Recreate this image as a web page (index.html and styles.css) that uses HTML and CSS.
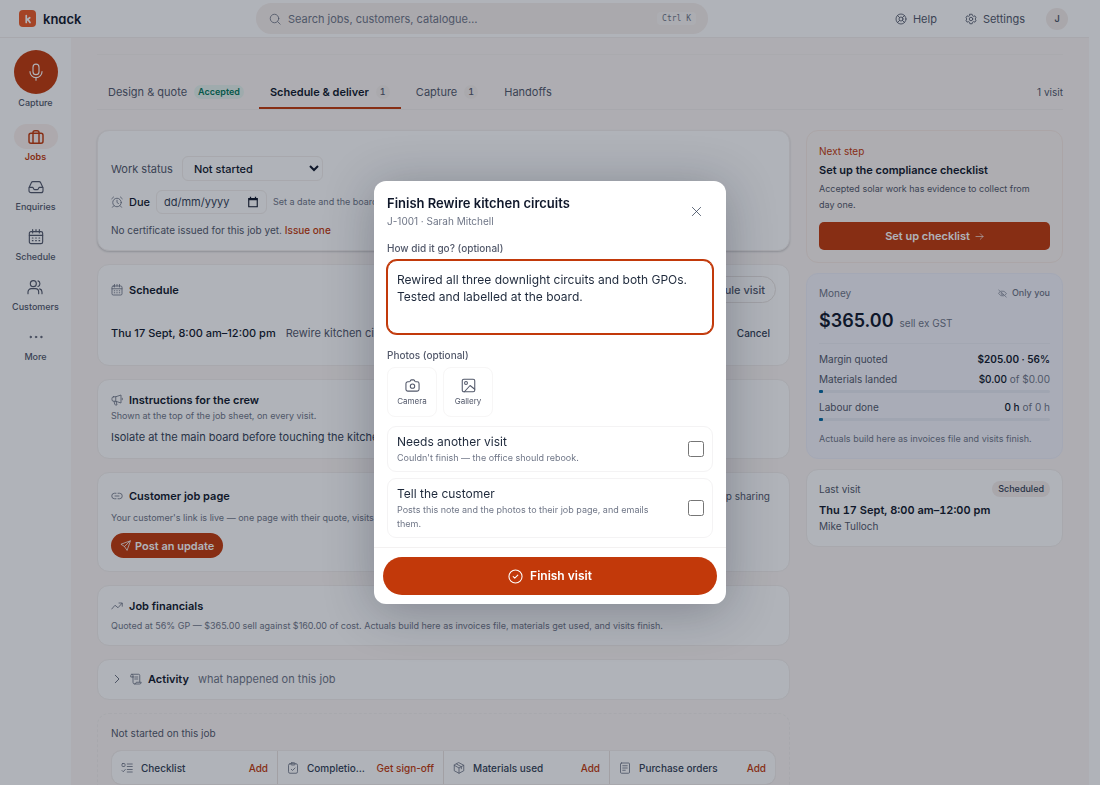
FILE: index.html
```html
<!DOCTYPE html>
<html lang="en-AU">
<head>
<meta charset="utf-8">
<meta name="viewport" content="width=device-width, initial-scale=1">
<title>Rewire kitchen circuits – knack</title>
<link rel="stylesheet" href="styles.css">
</head>
<body>
<svg class="sprite" aria-hidden="true">
  <symbol id="i-search" viewBox="0 0 24 24"><circle cx="11" cy="11" r="8.5"/><path d="m17.3 17.3 5 5"/></symbol>
  <symbol id="i-help" viewBox="0 0 24 24"><circle cx="12" cy="12" r="10"/><circle cx="12" cy="12" r="4"/><path d="m5 5 4.2 4.2M14.8 14.8 19 19M19 5l-4.2 4.2M9.200 14.8 5 19"/></symbol>
  <symbol id="i-gear" viewBox="0 0 24 24"><path d="M9.700 2.500h4.600l.7 2.900 2 1.200 2.900-.9 2.300 4-2.200 2.100v.4l2.200 2.100-2.300 4-2.900-.9-2 1.200-.7 2.900H9.700L9 18.600l-2-1.200-2.900.9-2.300-4L4 12.200v-.4L1.800 9.700l2.300-4 2.900.9 2-1.200z"/><circle cx="12" cy="12" r="3.500"/></symbol>
  <symbol id="i-mic" viewBox="0 0 24 24"><rect x="8" y="1.500" width="8" height="14" rx="4"/><path d="M4 11.500a8 8 0 0 0 16 0M12 19.500v3.500"/></symbol>
  <symbol id="i-case" viewBox="0 0 24 24"><rect x="1.500" y="6.500" width="21" height="15" rx="3"/><path d="M7.500 21.500v-16a3 3 0 0 1 3-3h3a3 3 0 0 1 3 3v16"/></symbol>
  <symbol id="i-inbox" viewBox="0 0 24 24"><path d="M1.500 13 5 5.500Q5.700 4 7.400 4h9.200q1.700 0 2.400 1.500L22.500 13v4.500a3 3 0 0 1-3 3h-15a3 3 0 0 1-3-3zM1.500 12.500h5.700l1.600 2.700q.5.800 1.400.8h3.600q.9 0 1.400-.8l1.600-2.700h5.700"/></symbol>
  <symbol id="i-cal" viewBox="0 0 24 24"><rect x="2" y="4" width="20" height="18" rx="2.500"/><path d="M2 9.500h20M7 1v5M17 1v5M12 1v3"/><path d="M6.500 13.500h1M11.500 13.500h1M16.500 13.500h1M6.500 17.500h1M11.500 17.500h1M16.500 17.500h1"/></symbol>
  <symbol id="i-users" viewBox="0 0 24 24"><circle cx="9.500" cy="7" r="4.500"/><path d="M1.500 22v-2.500a5 5 0 0 1 5-5h6a5 5 0 0 1 5 5V22M16.500 2.800a4.500 4.500 0 0 1 0 8.400M19 14.800q3.500 1.100 3.500 4.700V22"/></symbol>
  <symbol id="i-dots" viewBox="0 0 24 24"><g fill="currentColor" stroke-width="1"><circle cx="4" cy="12" r="1.200"/><circle cx="12" cy="12" r="1.200"/><circle cx="20" cy="12" r="1.200"/></g></symbol>
  <symbol id="i-alarm" viewBox="0 0 24 24"><circle cx="12" cy="13" r="8.500"/><path d="M12 8.500V13l3 2M1.500 5.500l3.700-3.500M22.500 5.500 18.800 2M5.500 19.500 3 22.500M18.500 19.500l2.500 3"/></symbol>
  <symbol id="i-horn" viewBox="0 0 24 24"><path d="M5 5.500h4.500L20 2v16l-10.500-3.500H5q-3 0-3-3v-3q0-3 3-3zM9.500 5.500v9M6 14.500l1.500 6q.4 1.500 2 1.500h2.500l-1.700-7M22.500 8.500v3"/></symbol>
  <symbol id="i-link" viewBox="0 0 24 24"><path d="M10 17.500H7a5.500 5.500 0 0 1 0-11h3M14 6.500h3a5.500 5.500 0 0 1 0 11h-3M8 12h8"/></symbol>
  <symbol id="i-send" viewBox="0 0 24 24"><path d="M22 2 2 9.200l7.800 5L15 22zM9.800 14.200 22 2"/></symbol>
  <symbol id="i-trend" viewBox="0 0 24 24"><path d="m1.500 18 6.500-7.500 6 5L22 6.500M16 6h6.500v6.500"/></symbol>
  <symbol id="i-chev" viewBox="0 0 24 24"><path d="m8.500 4.500 7.500 7.500-7.500 7.500"/></symbol>
  <symbol id="i-scroll" viewBox="0 0 24 24"><path d="M6 7V18.500a3.500 3.500 0 0 0 3.500 3.500H19a3.500 3.500 0 0 0 3.500-3.500H12.500a3.500 3.500 0 0 1-3.200 3.500M6 8H1.500V5A2.500 2.500 0 0 1 4 2.500h13a2.500 2.500 0 0 1 2.500 2.500v13M4 2.500Q6 3 6 5v3M9.500 8h6M9.500 12h6"/></symbol>
  <symbol id="i-list" viewBox="0 0 24 24"><rect x="2" y="3" width="6" height="6" rx="1.500"/><path d="m2 17 2.500 2.500L8.500 15M12.500 4h10M12.500 9h10M12.500 15h10M12.500 20h10"/></symbol>
  <symbol id="i-clip" viewBox="0 0 24 24"><rect x="3" y="3.500" width="18" height="19" rx="3"/><rect x="8" y="1.500" width="8" height="4.500" rx="1.500"/><path d="m8.500 14.500 2.500 2.500 5-5"/></symbol>
  <symbol id="i-box" viewBox="0 0 24 24"><path d="m12 1.500 9.500 5v11L12 22.500l-9.500-5v-11zM2.500 6.500 12 12l9.500-5.500M12 12v10.500M7 4l9.700 5.500v4"/></symbol>
  <symbol id="i-receipt" viewBox="0 0 24 24"><rect x="3" y="2" width="18" height="20.500" rx="2"/><path d="M7.500 7.500h9M7.500 12h9M7.500 16.500h5"/></symbol>
  <symbol id="i-eyeoff" viewBox="0 0 24 24"><path d="M2 3 22 21.500M9 5.500q8-2 13.500 6.500-1.500 2.500-3.700 4M5.500 7Q3 9 1.500 12q5.500 8.500 13.500 6.500M9.500 10a3.300 3.300 0 0 0 4.500 4.800"/></symbol>
  <symbol id="i-arrow" viewBox="0 0 24 24"><path d="M2.500 12h19M14 4.500l7.500 7.500-7.500 7.500"/></symbol>
  <symbol id="i-x" viewBox="0 0 24 24"><path d="m3 3 18 18M21 3 3 21"/></symbol>
  <symbol id="i-camera" viewBox="0 0 24 24"><path d="M4.500 6h2.300q.9 0 1.400-.8l.8-1.400q.5-.8 1.400-.8h3.200q.9 0 1.400.8l.8 1.400q.5.800 1.400.8h2.300a3 3 0 0 1 3 3v9a3 3 0 0 1-3 3h-15a3 3 0 0 1-3-3V9a3 3 0 0 1 3-3z"/><circle cx="12" cy="13" r="3.500"/></symbol>
  <symbol id="i-image" viewBox="0 0 24 24"><rect x="2" y="2" width="20" height="20" rx="2.500"/><circle cx="8" cy="8" r="2.300"/><path d="m5.500 22 9-10 7.500 6"/></symbol>
  <symbol id="i-check" viewBox="0 0 24 24"><circle cx="12" cy="12" r="10.500"/><path d="m8.300 12.300 2.500 2.300 4.900-4.900"/></symbol>
  <symbol id="i-date" viewBox="0 0 24 24"><path d="M3.500 5h17v16.500h-17z" stroke-width="2.200"/><path d="M3 6.500h18" stroke-width="4"/><path d="M7 1.500V5M17 1.500V5" stroke-width="2.500"/></symbol>
  <symbol id="i-knack" viewBox="0 0 24 24"><path d="M8.500 5v14M15.500 9.500l-6 4.500M11.500 12.500l4.500 6.500" stroke-width="3.400"/></symbol>
</svg>

<div class="app">
  <header class="topbar">
    <a class="brand" href="#"><span class="brand-mark"><svg class="icon"><use href="#i-knack"/></svg></span>knack</a>
    <label class="search"><svg class="icon"><use href="#i-search"/></svg><input type="search" aria-label="Search" placeholder="Search jobs, customers, catalogue…"><kbd>Ctrl K</kbd></label>
    <nav class="top-links" aria-label="Account">
      <a href="#"><svg class="icon"><use href="#i-help"/></svg>Help</a>
      <a href="#"><svg class="icon"><use href="#i-gear"/></svg>Settings</a>
      <button class="avatar" type="button">J</button>
    </nav>
  </header>

  <div class="shell">
    <nav class="rail" aria-label="Main">
      <button class="capture" type="button"><span class="capture-disc"><svg class="icon"><use href="#i-mic"/></svg></span>Capture</button>
      <a class="rail-item is-active" href="#"><span class="rail-pill"><svg class="icon"><use href="#i-case"/></svg></span>Jobs</a>
      <a class="rail-item" href="#"><span class="rail-pill"><svg class="icon"><use href="#i-inbox"/></svg></span>Enquiries</a>
      <a class="rail-item" href="#"><span class="rail-pill"><svg class="icon"><use href="#i-cal"/></svg></span>Schedule</a>
      <a class="rail-item" href="#"><span class="rail-pill"><svg class="icon"><use href="#i-users"/></svg></span>Customers</a>
      <a class="rail-item" href="#"><span class="rail-pill"><svg class="icon"><use href="#i-dots"/></svg></span>More</a>
    </nav>

    <main class="page">
      <div class="tabs">
        <a class="tab" href="#">Design &amp; quote <span class="badge badge-ok">Accepted</span></a>
        <a class="tab is-active" href="#">Schedule &amp; deliver <span class="badge">1</span></a>
        <a class="tab" href="#">Capture <span class="badge">1</span></a>
        <a class="tab" href="#">Handoffs</a>
        <span class="tabs-note">1 visit</span>
      </div>

      <div class="columns">
        <div class="stack">
          <section class="card card-status">
            <div class="field field-status"><label for="status">Work status</label>
              <select id="status"><option>Not started</option></select></div>
            <div class="field field-due"><svg class="icon"><use href="#i-alarm"/></svg><label class="strong" for="due">Due</label>
              <span class="date"><input id="due" type="text" placeholder="dd/mm/yyyy"><svg class="icon"><use href="#i-date"/></svg></span>
              <span class="hint">Set a date and the board will track it.</span></div>
            <p class="cert">No certificate issued for this job yet. <a href="#">Issue one</a></p>
          </section>

          <section class="card card-schedule">
            <div class="head"><h2><svg class="icon"><use href="#i-cal"/></svg>Schedule</h2><button class="outline" type="button">Schedule visit</button></div>
            <div class="visit"><strong>Thu 17 Sept, 8:00 am–12:00 pm</strong><span>Rewire kitchen circuits</span><button class="plain dark" type="button">Cancel</button></div>
          </section>

          <section class="card card-crew">
            <h2><svg class="icon"><use href="#i-horn"/></svg>Instructions for the crew</h2>
            <p class="hint">Shown at the top of the job sheet, on every visit.</p>
            <p class="body">Isolate at the main board before touching the kitchen circuits.</p>
          </section>

          <section class="card card-link">
            <div class="head"><h2><svg class="icon"><use href="#i-link"/></svg>Customer job page</h2><button class="plain" type="button">Stop sharing</button></div>
            <p class="hint">Your customer's link is live — one page with their quote, visits and photos.</p>
            <button class="post" type="button"><svg class="icon"><use href="#i-send"/></svg>Post an update</button>
          </section>

          <section class="card card-fin">
            <h2><svg class="icon"><use href="#i-trend"/></svg>Job financials</h2>
            <p class="hint">Quoted at 56% GP — $365.00 sell against $160.00 of cost. Actuals build here as invoices file, materials get used, and visits finish.</p>
          </section>

          <section class="card card-activity">
            <svg class="icon"><use href="#i-chev"/></svg>
            <h2><svg class="icon"><use href="#i-scroll"/></svg>Activity</h2><span>what happened on this job</span>
          </section>

          <section class="card card-todo">
            <p>Not started on this job</p>
            <div class="todo">
              <div class="todo-item"><svg class="icon"><use href="#i-list"/></svg><span>Checklist</span><button class="add" type="button">Add</button></div>
              <div class="todo-item"><svg class="icon"><use href="#i-clip"/></svg><span>Completion certificate</span><button class="add" type="button">Get sign-off</button></div>
              <div class="todo-item"><svg class="icon"><use href="#i-box"/></svg><span>Materials used</span><button class="add" type="button">Add</button></div>
              <div class="todo-item"><svg class="icon"><use href="#i-receipt"/></svg><span>Purchase orders</span><button class="add" type="button">Add</button></div>
            </div>
          </section>
        </div>

        <aside class="side">
          <section class="card card-next">
            <p class="eyebrow">Next step</p>
            <h2>Set up the compliance checklist</h2>
            <p class="copy">Accepted solar work has evidence to collect from day one.</p>
            <button class="setup" type="button">Set up checklist <svg class="icon"><use href="#i-arrow"/></svg></button>
          </section>

          <section class="card card-money">
            <div class="pair money-head"><span>Money</span><span class="only"><svg class="icon"><use href="#i-eyeoff"/></svg>Only you</span></div>
            <p class="amount"><strong>$365.00</strong> <span>sell ex GST</span></p>
            <div class="pair row-margin"><span>Margin quoted</span><b>$205.00 · 56%</b></div>
            <div class="pair"><span>Materials landed</span><span class="of"><em>$0.00</em> of $0.00</span></div>
            <div class="bar"><i></i></div>
            <div class="pair"><span>Labour done</span><span class="of"><em>0 h</em> of 0 h</span></div>
            <div class="bar"><i></i></div>
            <p class="note">Actuals build here as invoices file and visits finish.</p>
          </section>

          <section class="card card-last">
            <div class="pair"><span>Last visit</span><span class="chip">Scheduled</span></div>
            <h2>Thu 17 Sept, 8:00 am–12:00 pm</h2>
            <p>Mike Tulloch</p>
          </section>
        </aside>
      </div>
    </main>
  </div>
</div>

<div class="overlay">
  <form class="modal" role="dialog" aria-modal="true" aria-labelledby="modal-title">
    <div class="modal-body">
      <header class="modal-head">
        <div><h1 id="modal-title">Finish Rewire kitchen circuits</h1><p>J-1001 · Sarah Mitchell</p></div>
        <button class="close" type="button" aria-label="Close"><svg class="icon"><use href="#i-x"/></svg></button>
      </header>
      <label class="modal-label" for="notes">How did it go? (optional)</label>
      <textarea id="notes">Rewired all three downlight circuits and both GPOs. Tested and labelled at the board.</textarea>
      <p class="modal-label photos">Photos (optional)</p>
      <div class="tiles">
        <button class="tile" type="button"><svg class="icon"><use href="#i-camera"/></svg>Camera</button>
        <button class="tile" type="button"><svg class="icon"><use href="#i-image"/></svg>Gallery</button>
      </div>
      <label class="option"><span><b>Needs another visit</b><small>Couldn't finish — the office should rebook.</small></span><input type="checkbox"></label>
      <label class="option"><span><b>Tell the customer</b><small>Posts this note and the photos to their job page, and emails them.</small></span><input type="checkbox"></label>
    </div>
    <footer class="modal-foot"><button class="finish" type="submit"><svg class="icon"><use href="#i-check"/></svg>Finish visit</button></footer>
  </form>
</div>
</body>
</html>
```
FILE: styles.css
```css
:root {
  --ink: #0f172a;
  --text: #334155;
  --muted: #52586a;
  --soft: #6f7687;
  --brand: #c2390a;
  --page: #fcf7f5;
  --line: #f3efed;
}

* { box-sizing: border-box; }

body {
  margin: 0;
  height: 100vh;
  overflow: hidden;
  background: #fff;
  color: var(--muted);
  font: 11px/16px Inter, "Liberation Sans", sans-serif;
}

h1, h2, p { margin: 0; }
a { color: inherit; text-decoration: none; }
button, input, select, textarea { font: inherit; color: inherit; }
button { border: 0; background: none; padding: 0; }
.sprite { display: none; }

.icon {
  width: 12px;
  height: 12px;
  flex: none;
  fill: none;
  stroke: currentColor;
  stroke-width: 1.700;
  stroke-linecap: round;
  stroke-linejoin: round;
}

.app {
  height: 100vh;
  padding-right: 11px;
  display: flex;
  flex-direction: column;
}

/* Top bar */
.topbar {
  height: 38px;
  flex: none;
  display: grid;
  grid-template-columns: 237fr 452fr 360fr;
  align-items: center;
  padding: 0 21px 0 19px;
  border-bottom: 1px solid var(--line);
}
.brand {
  display: flex;
  align-items: center;
  gap: 7px;
  color: var(--ink);
  font-size: 13px;
  font-weight: 600;
  font-feature-settings: "cv11", "ss03";
}
.brand-mark {
  display: grid;
  place-items: center;
  width: 17px;
  height: 17px;
  border-radius: 4px;
  background: #ee5a24;
  color: #fff;
}
.search {
  display: flex;
  align-items: center;
  gap: 7px;
  height: 31px;
  padding: 0 12px 0 13px;
  border-radius: 16px;
  background: #f7f0ed;
  color: var(--soft);
}
.search input {
  flex: 1;
  min-width: 0;
  border: 0;
  padding: 0;
  background: none;
  outline: 0;
}
.search input::placeholder { color: var(--soft); opacity: 1; }
kbd {
  padding: 0 5px;
  border-radius: 4px;
  background: #faf7f5;
  font: 8px/13px "DejaVu Sans Mono", monospace;
}
.top-links {
  display: flex;
  justify-content: flex-end;
  align-items: center;
}
.top-links a { display: flex; align-items: center; gap: 6px; margin-right: 28px; }
.top-links a + a { margin-right: 21px; }
.avatar {
  width: 22px;
  height: 22px;
  border-radius: 50%;
  background: #f5eeeb;
  font-size: 9px;
  font-weight: 600;
}

/* Navigation rail */
.shell { flex: 1; min-height: 0; display: flex; }
.rail {
  width: 71px;
  flex: none;
  display: flex;
  flex-direction: column;
  align-items: center;
  gap: 11px;
  padding-top: 12px;
  font-size: 9px;
  line-height: 12px;
  font-weight: 500;
}
.capture {
  display: flex;
  flex-direction: column;
  align-items: center;
  gap: 3px;
  margin-bottom: 4px;
}
.capture-disc {
  display: grid;
  place-items: center;
  width: 44px;
  height: 44px;
  border-radius: 50%;
  background: var(--brand);
  color: #fff;
}
.capture-disc .icon { width: 18px; height: 18px; stroke-width: 1.500; }
.rail-item {
  display: flex;
  flex-direction: column;
  align-items: center;
  gap: 2px;
}
.rail-pill {
  display: grid;
  place-items: center;
  width: 44px;
  height: 25px;
  border-radius: 13px;
}
.rail-pill .icon { width: 16px; height: 16px; }
.rail-item.is-active { color: var(--brand); font-weight: 600; }
.is-active .rail-pill { background: #fbf1ed; }
.is-active .icon { stroke-width: 2.200; }

/* Page */
.page {
  flex: 1;
  min-width: 0;
  padding: 16px 26px 0;
  overflow: hidden;
  background: var(--page);
}
.tabs {
  display: flex;
  align-items: flex-end;
  gap: 4px;
  padding-top: 21px;
  border-top: 1px solid #f6f2ef;
  border-bottom: 1px solid var(--line);
}
.tab {
  display: flex;
  align-items: center;
  gap: 7px;
  height: 33px;
  padding: 0 11px;
  border-bottom: 2px solid transparent;
}
.tab.is-active { color: var(--ink); border-color: var(--brand); font-weight: 600; }
.badge {
  min-width: 14px;
  padding: 0 4px;
  border-radius: 7px;
  background: #f7f1ee;
  color: var(--muted);
  font-size: 9px;
  line-height: 14px;
  font-weight: 500;
  font-feature-settings: "tnum";
}
.badge-ok { background: #e6f4ee; color: #04785a; font-weight: 600; }
.tabs-note { margin-left: auto; padding-bottom: 9px; font-size: 10px; }

.columns {
  display: grid;
  grid-template-columns: minmax(0, 1fr) 257px;
  gap: 16px;
  padding-top: 20px;
}
.stack { display: flex; flex-direction: column; gap: 13px; }
.side { display: flex; flex-direction: column; gap: 10px; }
.card {
  padding: 12px 13px;
  border: 1px solid var(--line);
  border-radius: 12px;
  background: #fff;
}
.card h2 {
  display: flex;
  align-items: center;
  gap: 6px;
  color: var(--ink);
  font-size: 11px;
  line-height: 16px;
  font-weight: 600;
}
.card h2 .icon { color: var(--soft); }
.hint { color: var(--soft); font-size: 9px; }
.head { display: flex; align-items: center; justify-content: space-between; }
.pair { display: flex; align-items: center; justify-content: space-between; }

.card-status { padding-top: 25px; box-shadow: 0 1px 2px rgb(15 23 42 / .2); }
.field { display: flex; align-items: center; gap: 6px; color: var(--soft); }
.field-status { gap: 9px; color: var(--muted); }
.field select {
  width: 141px;
  height: 25px;
  padding: 0 0 0 7px;
  border: 1px solid var(--line);
  border-radius: 6px;
  background: #fff;
  color: var(--ink);
  font-weight: 500;
}
.field-due { margin-top: 9px; }
.strong { color: var(--ink); font-weight: 500; }
.date {
  display: flex;
  align-items: center;
  width: 111px;
  height: 24px;
  padding: 0 7px;
  border: 1px solid var(--line);
  border-radius: 6px;
  color: var(--ink);
}
.date input { width: 100%; min-width: 0; padding: 0; border: 0; background: none; outline: 0; }
.date input::placeholder { color: var(--text); opacity: 1; }
.date .icon { stroke-linecap: butt; stroke-linejoin: miter; }
.cert { margin-top: 8px; font-size: 10px; }
.cert a, .add { color: var(--brand); font-weight: 500; }

.outline {
  height: 27px;
  padding: 0 10px;
  border: 1px solid #e9e4e2;
  border-radius: 14px;
  color: var(--muted);
  font-weight: 500;
}
.plain { padding-right: 6px; font-size: 10px; }
.plain.dark { margin-left: auto; color: var(--text); font-weight: 500; }
.card-schedule { padding-top: 11px; }
.visit { display: flex; align-items: center; gap: 10px; padding: 22px 0 12px; }
.visit strong { color: var(--ink); font-weight: 500; }
.body { margin-top: 6px; color: var(--text); }
.card-crew { padding-bottom: 13px; }
.card-crew .hint { line-height: 15px; }
.card-link { padding-top: 15px; padding-bottom: 13px; }
.card-link .hint { margin-top: 6px; }
.post {
  display: flex;
  align-items: center;
  gap: 4px;
  height: 25px;
  margin-top: 7px;
  padding: 0 9px;
  border-radius: 13px;
  background: var(--brand);
  color: #fff;
  font-weight: 600;
}
.post .icon { width: 11px; height: 11px; }
.card-fin { padding-bottom: 11px; }
.card-fin .hint { margin-top: 4px; }
.card-activity { display: flex; align-items: center; gap: 7px; padding-top: 11px; }
.card-activity > span { margin-left: 2px; color: var(--soft); }
.card-todo { padding-top: 11px; border-style: dashed; background: none; font-size: 10px; }
.todo {
  display: grid;
  grid-template-columns: repeat(4, minmax(0, 1fr));
  gap: 1px;
  margin-top: 9px;
  overflow: hidden;
  border: 1px solid var(--line);
  border-radius: 10px;
  background: #ebe3e0;
}
.todo-item { display: flex; align-items: center; gap: 8px; height: 33px; padding: 0 9px; background: #fff; color: var(--soft); }
.todo-item span { flex: 1; overflow: hidden; text-overflow: ellipsis; white-space: nowrap; color: var(--text); font-weight: 500; }
.todo-item .add { font-size: 10px; }

/* Side cards */
.side .card { padding: 12px; }
.side .card-next { background: #fdf6f3; border-color: #f8ebe5; }
.eyebrow { color: var(--brand); font-size: 10px; }
.card-next h2 { margin-top: 3px; }
.copy { margin-top: 3px; padding-right: 12px; font-size: 9px; }
.setup {
  display: flex;
  align-items: center;
  justify-content: center;
  gap: 5px;
  width: 100%;
  height: 28px;
  margin-top: 9px;
  border-radius: 5px;
  background: var(--brand);
  color: #fff;
  font-weight: 600;
}
.setup .icon { width: 9px; height: 9px; }

.side .card-money { padding: 11px 12px; background: #f5f5fc; border-color: #eeeffa; font-size: 10px; }
.money-head, .of, .note { color: var(--soft); }
.only { display: flex; align-items: center; gap: 5px; font-size: 9px; font-weight: 500; }
.only .icon { width: 9px; height: 9px; }
.amount {
  display: flex;
  align-items: baseline;
  gap: 6px;
  padding: 8px 0;
  border-bottom: 1px solid #eceef5;
  line-height: 24px;
  color: var(--soft);
}
.amount strong { color: var(--ink); font-size: 18px; font-weight: 600; }
.row-margin { margin: 7px 0 4px; }
.row-margin b { color: var(--ink); font-weight: 600; }
.of em { color: var(--ink); font-style: normal; font-weight: 500; }
.bar { height: 3px; margin: 3px 0 6px; border-radius: 2px; background: #e8ebf4; }
.bar i { display: block; width: 4px; height: 3px; border-radius: 1px; background: #0369a1; }
.note { margin-top: 10px; font-size: 9px; }

.side .card-last { padding-top: 11px; font-size: 10px; }
.chip { padding: 0 6px; border-radius: 8px; background: #f5eeeb; color: var(--text); font-size: 9px; font-weight: 500; }
.card-last h2 { margin-top: 5px; font-feature-settings: "tnum"; }

/* Dialog */
.overlay {
  position: fixed;
  inset: 0;
  display: grid;
  place-items: center;
  background: rgb(15 23 42 / .33);
}
.modal {
  width: 352px;
  border-radius: 12px;
  overflow: hidden;
  background: #fff;
  box-shadow: 0 6px 50px rgb(15 23 42 / .3);
}
.modal-body { padding: 12px 13px 9px; }
.modal-head { display: flex; justify-content: space-between; align-items: center; }
.modal-head h1 { color: var(--ink); font-size: 13px; line-height: 20px; font-weight: 600; }
.modal-head p { color: var(--soft); font-size: 10px; }
.close { display: grid; place-items: center; width: 34px; height: 34px; color: var(--text); }
.close .icon { width: 11px; height: 11px; }
.modal-label { display: block; margin-top: 11px; font-size: 10px; font-weight: 500; }
textarea {
  display: block;
  width: 100%;
  height: 74px;
  margin-top: 4px;
  padding: 10px 9px;
  border: 1px solid var(--brand);
  border-radius: 10px;
  outline: 0;
  box-shadow: 0 0 0 1px var(--brand);
  resize: none;
  color: #1e293b;
  font-size: 12px;
  line-height: 17px;
}
.modal-label.photos { margin-top: 13px; }
.tiles { display: flex; gap: 6px; margin: 4px 0 9px; }
.tile {
  display: flex;
  flex-direction: column;
  align-items: center;
  justify-content: center;
  gap: 2px;
  width: 50px;
  height: 50px;
  border: 1px solid #f7f6f6;
  border-radius: 8px;
  font-size: 8px;
  line-height: 12px;
}
.tile .icon { width: 15px; height: 15px; }
.option {
  display: flex;
  align-items: center;
  justify-content: space-between;
  gap: 24px;
  margin-top: 6px;
  padding: 6px 8px 6px 9px;
  border: 1px solid #f4f3f4;
  border-radius: 9px;
}
.option b { display: block; color: #1e293b; font-size: 12px; line-height: 18px; font-weight: 400; }
.option small { display: block; font-size: 9px; line-height: 14px; color: var(--soft); }
.option input { flex: none; width: 16px; height: 16px; margin: 0; }
.modal-foot { padding: 9px; border-top: 1px solid #f3f1f1; }
.finish {
  display: flex;
  align-items: center;
  justify-content: center;
  gap: 7px;
  width: 100%;
  height: 38px;
  border-radius: 19px;
  background: var(--brand);
  color: #fff;
  font-size: 12px;
  font-weight: 600;
}
.finish .icon { width: 15px; height: 15px; }
```
